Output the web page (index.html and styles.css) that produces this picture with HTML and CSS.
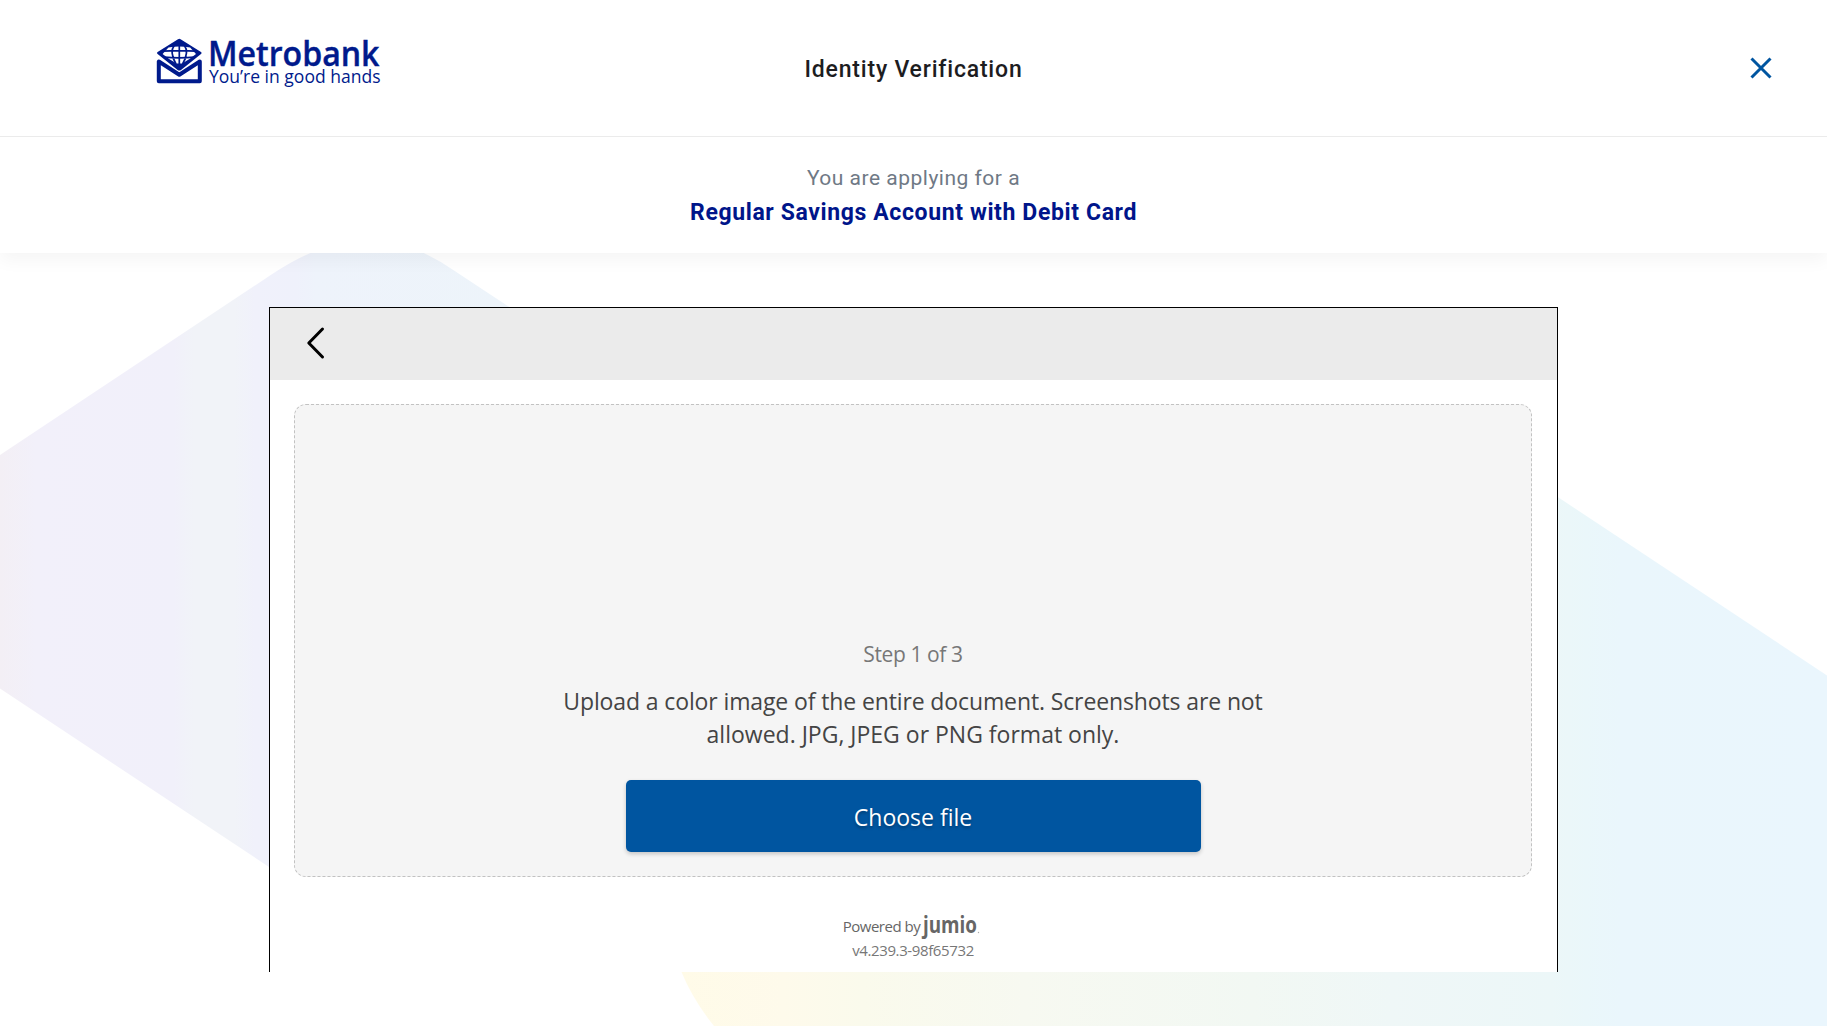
FILE: index.html
```html
<!DOCTYPE html>
<html lang="en">
<head>
<meta charset="utf-8">
<title>Identity Verification</title>
<link rel="stylesheet" href="styles.css">
</head>
<body>
<div class="page">
  <header class="top">
    <div class="bar">
      <svg class="logo" width="228" height="56" viewBox="154 34 228 56" role="img" aria-label="Metrobank">
        <path class="brand-fill" d="M178 39.200Q179.300 38.300 180.600 39.200L201 52Q202.400 53 201 54L181 70Q179.300 71.200 177.600 70L157.600 54Q156.200 53 157.600 52Z"/>
        <path class="globe" d="M168.500 47.500Q179.300 45.500 190.100 47.500L196 54Q189 60 182 63.500H176.600Q169.600 60 162.600 54Z"/>
        <path class="grid" d="M162 51.200Q179.300 50.200 196.600 51.200M164 57.200Q179.300 58.400 194.600 57.200M179.300 44V64M174.500 45Q169 52 176 64M184.100 45Q189.600 52 182.600 64"/>
        <path class="envelope" d="M158.800 61.500V81.300H199.800V61.500L179.300 74.700Z"/>
        <text class="logo-name" x="208" y="65.500" textLength="171.500" lengthAdjust="spacingAndGlyphs">Metrobank</text>
        <text class="logo-tag" x="209" y="82.500" textLength="171.500" lengthAdjust="spacingAndGlyphs">You’re in good hands</text>
      </svg>
      <h1 class="title">Identity Verification</h1>
      <svg class="close" width="24" height="24" viewBox="0 0 24 24" role="img" aria-label="Close"><path d="M2.500 2.500L21.500 21.500M21.500 2.500L2.500 21.500"/></svg>
    </div>
    <div class="product">
      <p class="applying">You are applying for a</p>
      <p class="account">Regular Savings Account with Debit Card</p>
    </div>
  </header>
  <main class="stage">
    <svg class="backdrop" viewBox="0 253 1827 773" preserveAspectRatio="none" aria-hidden="true">
      <defs>
        <linearGradient id="cool" gradientUnits="userSpaceOnUse" x1="0" y1="0" x2="510" y2="0">
          <stop offset="0" stop-color="#f3eff5"/><stop offset=".07" stop-color="#f2f0fa"/><stop offset=".34" stop-color="#f1f0fa"/><stop offset=".38" stop-color="#f1f3f8"/><stop offset=".46" stop-color="#f1f3f8"/><stop offset=".5" stop-color="#f0f1fb"/><stop offset=".58" stop-color="#eff1fb"/><stop offset=".62" stop-color="#eef3fb"/><stop offset="1" stop-color="#edf4fa"/>
        </linearGradient>
        <linearGradient id="warm" gradientUnits="userSpaceOnUse" x1="680" y1="0" x2="1827" y2="0">
          <stop offset="0" stop-color="#fffbe8"/><stop offset=".09" stop-color="#fefaeb"/><stop offset=".16" stop-color="#fafaec"/><stop offset=".3" stop-color="#f7f9f1"/><stop offset=".5" stop-color="#f2f8f3"/><stop offset=".62" stop-color="#eff7f7"/><stop offset=".76" stop-color="#ecf7f8"/><stop offset=".79" stop-color="#eaf7fa"/><stop offset=".82" stop-color="#eaf6fc"/><stop offset="1" stop-color="#eaf6fd"/>
        </linearGradient>
      </defs>
      <path fill="url(#cool)" d="M0 455L270 275.500Q296 258 318 250H417Q436 258 454 270.500L560 340.500V900H320L269 867L0 688.500Z"/>
      <path fill="url(#warm)" d="M681.500 972Q693 1000 714 1026H1827V675.500L1557 496.500L1200 500L681 900Z"/>
    </svg>
    <section class="panel">
      <div class="panel-head">
        <svg width="20" height="34" viewBox="0 0 20 34" role="img" aria-label="Back"><path class="chevron" d="M16.500 3L2.800 17L16.500 31"/></svg>
      </div>
      <div class="drop">
        <p class="step">Step 1 of 3</p>
        <p class="hint">Upload a color image of the entire document. Screenshots are not<br><span class="hint-end">allowed. JPG, JPEG or PNG format only.</span></p>
        <button class="choose" type="button">Choose file</button>
      </div>
      <footer class="foot">
        <div class="powered"><span>Powered by</span>
          <svg width="58" height="30" viewBox="0 0 58 30" role="img" aria-label="jumio"><text class="jumio" x="0" y="22" textLength="54" lengthAdjust="spacingAndGlyphs">jumio</text><circle cx="55.500" cy="21.500" r=".7" fill="#aaa"/></svg>
        </div>
        <p class="version">v4.239.3-98f65732</p>
      </footer>
    </section>
  </main>
</div>
</body>
</html>
```
FILE: styles.css
```css
* { box-sizing: border-box; }
body { margin: 0; background: #fff; }
h1, p { margin: 0; font-weight: 400; }
svg { display: block; overflow: visible; }

.page { height: 1026px; display: flex; flex-direction: column; overflow: hidden; font-family: "Open Sans", sans-serif; }

.top { flex: none; height: 253px; background: #fff; box-shadow: 0 8px 16px rgba(0, 0, 0, .04); position: relative; z-index: 1; font-family: Roboto, sans-serif; text-align: center; }
.bar { height: 137px; border-bottom: 1px solid #ebebeb; display: grid; grid-template-columns: 600px 319px 1fr; align-items: center; padding: 0 54px 0 154px; }
.logo { margin-top: -12px; }
.title { padding-top: 3px; font-size: 23px; font-weight: 500; line-height: 30px; letter-spacing: .8px; color: #1d1d1f; }
.close { justify-self: end; fill: none; stroke: #0055a0; stroke-width: 3; }
.product { padding-top: 25px; }
.applying { font-size: 21px; line-height: 32px; letter-spacing: .5px; color: #6f7985; }
.account { padding-top: 1px; font-size: 23px; font-weight: 700; line-height: 36px; letter-spacing: .62px; color: #00158a; }

.brand-fill { fill: #001a8c; }
.globe { fill: #fff; }
.grid { fill: none; stroke: #001a8c; stroke-width: 1.7; }
.envelope { fill: none; stroke: #001a8c; stroke-width: 4; stroke-linejoin: round; }
.logo-name { font: 600 34px "Open Sans", sans-serif; fill: #001a8c; stroke: #001a8c; stroke-width: .4; }
.logo-tag { font: 400 17.500px "Open Sans", sans-serif; fill: #001a8c; }

.stage { flex: 1; position: relative; padding: 54px 269px; }
.backdrop { position: absolute; inset: 0; width: 100%; height: 100%; overflow: hidden; }
.panel { position: relative; width: 1289px; height: 665px; background: #fff; border: 1px solid #000; border-bottom: 0; display: flex; flex-direction: column; }
.panel-head { flex: none; height: 72px; background: #ebebeb; padding: 18px 36px; }
.chevron { fill: none; stroke: #000; stroke-width: 3; stroke-linecap: round; stroke-linejoin: round; }
.drop { flex: none; height: 473px; width: 1238px; margin: 24px 0 0 24px; border: 1px dashed #c2c2c2; border-radius: 12px; background: #f5f5f5; display: flex; flex-direction: column; align-items: center; justify-content: flex-end; padding-bottom: 24px; text-align: center; }
.step { font-size: 21px; line-height: 30px; letter-spacing: -.4px; color: #777; }
.hint { margin-top: 16px; font-size: 23px; line-height: 33px; letter-spacing: -.12px; color: #444; white-space: nowrap; }
.hint-end { letter-spacing: 0; }
.choose { margin-top: 29px; width: 575px; height: 72px; border: 0; border-radius: 5px; background: #0055a0; color: #fff; font: 400 23px/30px "Open Sans", sans-serif; padding: 1px 0 0; box-shadow: 0 2px 4px rgba(0, 0, 0, .2); text-shadow: 0 2px 3px rgba(0, 0, 0, .3); }
.foot { padding-top: 34px; text-align: center; color: #666; }
.powered { display: flex; justify-content: center; gap: 3px; padding-right: 3px; font-size: 15px; line-height: 30px; letter-spacing: -.5px; }
.version { margin-top: -1px; padding-right: 1px; font-size: 15px; line-height: 20px; letter-spacing: -.38px; color: #777; }
.jumio { font: 700 24px "Open Sans", sans-serif; fill: #666; letter-spacing: 0; }
```
